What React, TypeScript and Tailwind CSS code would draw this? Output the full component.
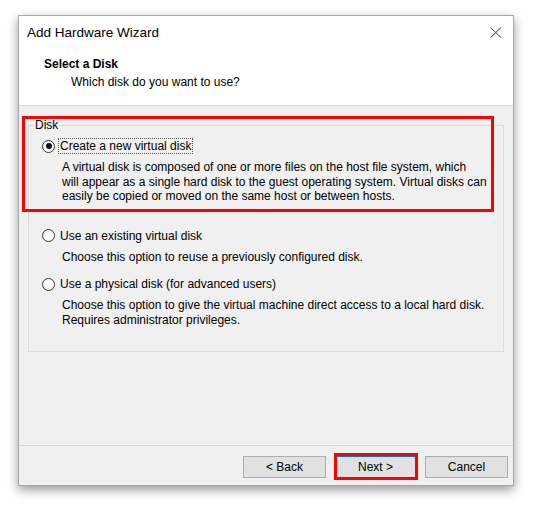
import React from "react";

const font = "font-['Liberation_Sans','Arial',sans-serif]";

function Radio({ checked }: { checked?: boolean }) {
  return (
    <span className="flex h-[13px] w-[13px] shrink-0 items-center justify-center rounded-full border border-[#333333] bg-white">
      {checked && <span className="h-[6px] w-[6px] rounded-full bg-[#111111]" />}
    </span>
  );
}

function Option({
  label,
  lines,
  checked,
  focused,
  className = "",
}: {
  label: string;
  lines: string[];
  checked?: boolean;
  focused?: boolean;
  className?: string;
}) {
  return (
    <div className={className}>
      <div className="flex h-[16px] items-center">
        <Radio checked={checked} />
        <span
          className={
            "ml-[3px] px-[1px] leading-[14px] border " +
            (focused ? "border-dotted border-[#555555]" : "border-transparent")
          }
        >
          {label}
        </span>
      </div>
      <div className="mt-[6px] pl-[20px] leading-[14.5px]">
        {lines.map((l) => (
          <div key={l}>{l}</div>
        ))}
      </div>
    </div>
  );
}

function Button({ children, focused }: { children: React.ReactNode; focused?: boolean }) {
  return (
    <button
      className={
        "relative h-[22px] w-[83px] border bg-[#e1e1e1] text-[12px] text-black " +
        (focused ? "border-[#0078d7]" : "border-[#adadad]")
      }
    >
      {children}
      {focused && (
        <span className="pointer-events-none absolute -left-[1px] -right-[2px] -top-[4px] -bottom-[3px] border-[3px] border-[#ff0000]" />
      )}
    </button>
  );
}

export default function App() {
  return (
    <div className={"min-h-screen bg-white pl-[18px] pt-[15px] text-[12px] text-black " + font}>
      <div className="flex h-[471px] w-[496px] flex-col border border-[#a8a8a8] bg-[#f0f0f0] shadow-[0_4px_10px_rgba(0,0,0,0.4)]">
        {/* title + header */}
        <div className="h-[90px] border-b border-[#d9d9d9] bg-white">
          <div className="flex h-[34px] items-center justify-between pl-[8px] pr-[11px]">
            <span className="text-[13.5px] leading-none">Add Hardware Wizard</span>
            <svg width="12" height="11" viewBox="0 0 12 11" className="-mt-[1px]">
              <path d="M0.5 0.5 L11 10.5 M11 0.5 L0.5 10.5" stroke="#333333" strokeWidth="1" fill="none" />
            </svg>
          </div>
          <div className="pl-[25px] pt-[6px] font-bold leading-[16px]">Select a Disk</div>
          <div className="pl-[52px] pt-[2px] leading-[16px]">Which disk do you want to use?</div>
        </div>

        {/* body */}
        <div className="relative flex-1 px-[9px] pt-[12px]">
          <fieldset className="border border-[#dcdcdc] pb-[24px] pl-[13px]">
            <legend className="-ml-[8px] px-[1px] leading-[14px]">Disk</legend>
            <Option
              className="mt-[6px]"
              checked
              focused
              label="Create a new virtual disk"
              lines={[
                "A virtual disk is composed of one or more files on the host file system, which",
                "will appear as a single hard disk to the guest operating system. Virtual disks can",
                "easily be copied or moved on the same host or between hosts.",
              ]}
            />
            <Option
              className="mt-[24px]"
              label="Use an existing virtual disk"
              lines={["Choose this option to reuse a previously configured disk."]}
            />
            <Option
              className="mt-[12px]"
              label="Use a physical disk (for advanced users)"
              lines={[
                "Choose this option to give the virtual machine direct access to a local hard disk.",
                "Requires administrator privileges.",
              ]}
            />
          </fieldset>
          <span className="pointer-events-none absolute left-[3px] top-[10px] h-[96px] w-[472px] border-[3px] border-[#ff0000]" />
        </div>

        {/* footer */}
        <div className="flex h-[40px] items-start justify-end gap-[8px] border-t border-[#d5d5d5] pr-[5px] pt-[10px]">
          <Button>&lt; Back</Button>
          <Button focused>Next &gt;</Button>
          <Button>Cancel</Button>
        </div>
      </div>
    </div>
  );
}
